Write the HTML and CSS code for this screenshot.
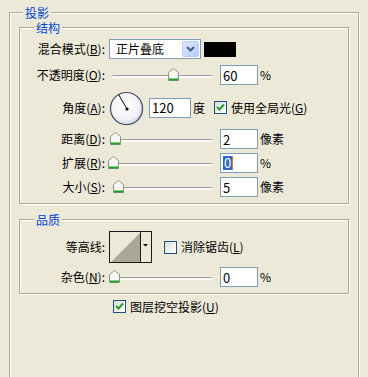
FILE: index.html
```html
<!DOCTYPE html>
<html lang="zh-CN">

<head>
    <meta charset="UTF-8">
    <title>投影</title>
    <link rel="stylesheet" href="styles.css">
</head>

<body>
    <div class="group outer">
        <div class="group-title">投影</div>

        <div class="group inner">
            <div class="group-title">结构</div>

            <div class="row row-blend">
                <label class="label">混合模式(<u>B</u>):</label>
                <div class="combo">
                    <span class="combo-text">正片叠底</span>
                    <span class="combo-btn">
                        <svg width="9" height="6" viewBox="0 0 9 6">
                            <path d="M1 1 L4.5 4.5 L8 1" fill="none" stroke="#4d6185" stroke-width="2" />
                        </svg>
                    </span>
                </div>
                <span class="swatch"></span>
            </div>

            <div class="row row-opacity">
                <label class="label">不透明度(<u>O</u>):</label>
                <div class="slider" style="--pos: 59px">
                    <div class="track"></div>
                    <svg class="thumb" width="11" height="13" viewBox="0 0 11 13">
                        <path d="M0.5 4.5 L5.5 0.5 L10.5 4.5 V12.5 H0.5 Z" fill="#f6f6f2" stroke="#8a968a" />
                        <path d="M1 11.5 H10" stroke="#21a121" stroke-width="2" />
                    </svg>
                </div>
                <input class="field" type="text" value="60">
                <span class="unit">%</span>
            </div>

            <div class="row row-angle">
                <label class="label">角度(<u>A</u>):</label>
                <svg class="dial" width="36" height="35" viewBox="0 0 36 35">
                    <defs>
                        <radialGradient id="dial-fill" cx="0.45" cy="0.4" r="0.65">
                            <stop offset="0" stop-color="#ffffff" />
                            <stop offset="0.7" stop-color="#f2f2f4" />
                            <stop offset="1" stop-color="#c8ccd8" />
                        </radialGradient>
                    </defs>
                    <circle cx="18" cy="18" r="16.5" fill="#d6d4c8" />
                    <circle cx="17.5" cy="17.5" r="16" fill="url(#dial-fill)" stroke="#3c4a6c" stroke-width="1.2" />
                    <line x1="18" y1="18" x2="9.5" y2="3.3" stroke="#000" stroke-width="1" />
                    <circle cx="18" cy="18" r="1.6" fill="#000" />
                </svg>
                <input class="field field-angle" type="text" value="120">
                <span class="unit">度</span>
                <span class="check checked check-global">
                    <svg width="11" height="11" viewBox="0 0 11 11">
                        <path d="M2 5 L4.5 7.5 L9 2.5" fill="none" stroke="#21a121" stroke-width="2" />
                    </svg>
                </span>
                <span class="check-text">使用全局光(<u>G</u>)</span>
            </div>

            <div class="row row-slider">
                <label class="label">距离(<u>D</u>):</label>
                <div class="slider" style="--pos: 1px">
                    <div class="track"></div>
                    <svg class="thumb" width="11" height="13" viewBox="0 0 11 13">
                        <path d="M0.5 4.5 L5.5 0.5 L10.5 4.5 V12.5 H0.5 Z" fill="#f6f6f2" stroke="#8a968a" />
                        <path d="M1 11.5 H10" stroke="#21a121" stroke-width="2" />
                    </svg>
                </div>
                <input class="field" type="text" value="2">
                <span class="unit">像素</span>
            </div>

            <div class="row row-slider">
                <label class="label">扩展(<u>R</u>):</label>
                <div class="slider" style="--pos: -1px">
                    <div class="track"></div>
                    <svg class="thumb" width="11" height="13" viewBox="0 0 11 13">
                        <path d="M0.5 4.5 L5.5 0.5 L10.5 4.5 V12.5 H0.5 Z" fill="#f6f6f2" stroke="#8a968a" />
                        <path d="M1 11.5 H10" stroke="#21a121" stroke-width="2" />
                    </svg>
                </div>
                <div class="field field-focus"><span class="selected">0</span><span class="caret"></span></div>
                <span class="unit">%</span>
            </div>

            <div class="row row-slider">
                <label class="label">大小(<u>S</u>):</label>
                <div class="slider" style="--pos: 4px">
                    <div class="track"></div>
                    <svg class="thumb" width="11" height="13" viewBox="0 0 11 13">
                        <path d="M0.5 4.5 L5.5 0.5 L10.5 4.5 V12.5 H0.5 Z" fill="#f6f6f2" stroke="#8a968a" />
                        <path d="M1 11.5 H10" stroke="#21a121" stroke-width="2" />
                    </svg>
                </div>
                <input class="field" type="text" value="5">
                <span class="unit">像素</span>
            </div>
        </div>

        <div class="group inner quality">
            <div class="group-title">品质</div>

            <div class="row row-contour">
                <label class="label">等高线:</label>
                <svg class="contour" width="43" height="32" viewBox="0 0 43 32">
                    <rect x="0.5" y="0.5" width="42" height="31" fill="#ece9d8" stroke="#1a1a1a" />
                    <path d="M2 31 L31 2 V31 Z" fill="#a9a898" />
                    <line x1="31.5" y1="1" x2="31.5" y2="31" stroke="#1a1a1a" />
                    <path d="M34 13 H39 L36.5 15.5 Z" fill="#000" />
                </svg>
                <span class="check check-alias"></span>
                <span class="check-text">消除锯齿(<u>L</u>)</span>
            </div>

            <div class="row row-slider">
                <label class="label">杂色(<u>N</u>):</label>
                <div class="slider" style="--pos: 0px">
                    <div class="track"></div>
                    <svg class="thumb" width="11" height="13" viewBox="0 0 11 13">
                        <path d="M0.5 4.5 L5.5 0.5 L10.5 4.5 V12.5 H0.5 Z" fill="#f6f6f2" stroke="#8a968a" />
                        <path d="M1 11.5 H10" stroke="#21a121" stroke-width="2" />
                    </svg>
                </div>
                <input class="field" type="text" value="0">
                <span class="unit">%</span>
            </div>
        </div>

        <div class="row row-knockout">
            <span class="check checked">
                <svg width="11" height="11" viewBox="0 0 11 11">
                    <path d="M2 5 L4.5 7.5 L9 2.5" fill="none" stroke="#21a121" stroke-width="2" />
                </svg>
            </span>
            <span class="check-text">图层挖空投影(<u>U</u>)</span>
        </div>
    </div>
</body>

</html>
```

FILE: styles.css
```css
*,
::before,
::after {
    margin: 0;
    padding: 0;
    box-sizing: border-box;
}

html,
body {
    height: 100%;
    overflow: hidden;
    font-family: 'Noto Sans CJK SC', 'DejaVu Sans', sans-serif;
    font-size: 12px;
    line-height: 14px;
    color: #000;
    background-color: #ece9d8;
}

u {
    text-decoration: underline;
    text-underline-offset: 1px;
}

/* group boxes */
.group {
    border: 1px solid #aca899;
    box-shadow: inset 1px 1px 0 #fff, 1px 1px 0 #fff;
}

.outer {
    height: 365px;
    margin: 12px 9px 0;
    border-bottom: none;
}

.inner {
    margin: 6px 9px 0;
    padding-bottom: 6px;
}

.quality {
    margin-top: 15px;
}

.group-title {
    width: fit-content;
    margin: -9px 0 0 13px;
    padding: 0 2px;
    line-height: 17px;
    color: #0046d5;
    background-color: #ece9d8;
}

.inner .group-title {
    margin-left: 14px;
}

/* rows */
.row {
    display: flex;
    align-items: center;
    height: 20px;
    margin-top: 4px;
}

.row-blend {
    margin-top: 3px;
}

.row-opacity {
    margin-top: 6px;
}

.row-angle {
    height: 35px;
    margin-top: 5px;
}

.row-contour {
    height: 32px;
    margin-top: 3px;
}

.row-knockout {
    height: 13px;
    margin: 6px 0 0 103px;
}

.label {
    width: 85px;
    margin-right: 4px;
    text-align: right;
    white-space: nowrap;
}

/* combo box */
.combo {
    display: flex;
    justify-content: space-between;
    width: 92px;
    height: 20px;
    padding: 1px;
    border: 1px solid #7f9db9;
    background-color: #fff;
}

.combo-text {
    padding-left: 5px;
    line-height: 16px;
}

.combo-btn {
    display: flex;
    align-items: center;
    justify-content: center;
    width: 17px;
    border: 1px solid #b9cdf7;
    border-radius: 2px;
    background: linear-gradient(135deg, #dde8fd, #b6cbf8);
}

.swatch {
    width: 32px;
    height: 15px;
    margin-left: 3px;
    background-color: #000;
}

/* sliders */
.slider {
    position: relative;
    width: 106px;
    height: 14px;
}

.track {
    height: 3px;
    margin: 7px 3px 0;
    border-top: 1px solid #9d9d9a;
    border-bottom: 1px solid #fff;
    border-radius: 2px;
    background-color: #f6f5ef;
}

.thumb {
    position: absolute;
    top: 0;
    left: var(--pos);
}

/* text fields */
.field {
    width: 38px;
    height: 20px;
    margin-left: 5px;
    padding: 0 2px;
    font: inherit;
    font-size: 13px;
    color: #000;
    border: 1px solid #7f9db9;
    background-color: #fff;
    outline: none;
}

.field-angle {
    width: 42px;
    margin-left: 4px;
}

.field-focus {
    display: flex;
    align-items: center;
    padding-left: 2px;
}

.selected {
    height: 14px;
    padding: 0 1px;
    line-height: 14px;
    color: #fff;
    background-color: #316ac5;
}

.caret {
    width: 1px;
    height: 14px;
    background-color: #e07a1f;
}

.unit {
    margin-left: 2px;
}

.dial {
    margin-top: 1px;
}

/* check boxes */
.check {
    display: flex;
    align-items: center;
    justify-content: center;
    width: 13px;
    height: 13px;
    border: 1px solid #1c5180;
    background: linear-gradient(135deg, #dcdcd7, #fff);
}

.check-global {
    margin-left: 9px;
}

.check-alias {
    margin-left: 12px;
}

.check-text {
    margin-left: 4px;
    white-space: nowrap;
}
```
